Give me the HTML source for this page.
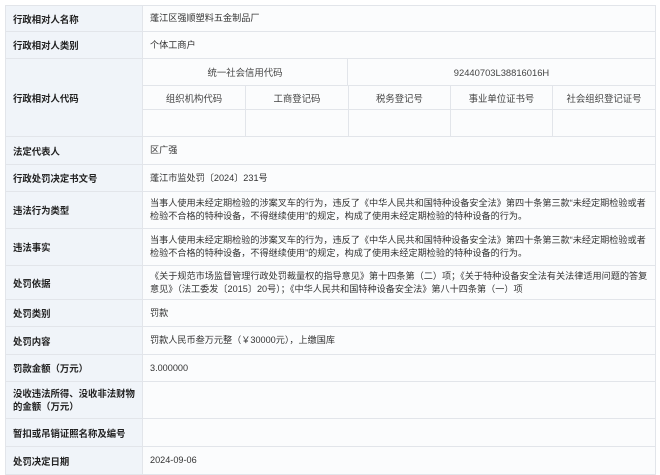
<!DOCTYPE html>
<html><head><meta charset="utf-8"><style>
body{margin:0;width:660px;height:470px;background:#fff;overflow:hidden;font-family:"Liberation Sans","Noto Sans CJK SC",sans-serif;font-size:9.4px;color:#333}
.c{position:absolute;box-sizing:border-box;border-right:1px solid #e2e5ea;border-bottom:1px solid #e2e5ea;display:flex;align-items:center}
.l{background:#f0f4f9;left:5px;width:138px;padding-left:7px;font-weight:bold;color:#222;border-left:1px solid #e2e5ea}
.v{background:#fbfcfd;left:143px;width:513px;padding:0 5px 0 7px;line-height:13px;font-size:9.15px}
.s{background:#fbfcfd;justify-content:center;color:#444}
</style></head><body>
<div class="c l" style="top:5px;height:27px;border-top:1px solid #e2e5ea">行政相对人名称</div>
<div class="c v" style="top:5px;height:27px;border-top:1px solid #e2e5ea">蓬江区强顺塑料五金制品厂</div>
<div class="c l" style="top:32px;height:27px">行政相对人类别</div>
<div class="c v" style="top:32px;height:27px">个体工商户</div>
<div class="c l" style="top:59px;height:78px">行政相对人代码</div>
<div class="c s" style="top:59px;left:143px;width:205px;height:27px">统一社会信用代码</div>
<div class="c s" style="top:59px;left:348px;width:308px;height:27px">92440703L38816016H</div>
<div class="c s" style="top:86px;left:143px;width:103px;height:24px">组织机构代码</div>
<div class="c s" style="top:86px;left:246px;width:103px;height:24px">工商登记码</div>
<div class="c s" style="top:86px;left:349px;width:102px;height:24px">税务登记号</div>
<div class="c s" style="top:86px;left:451px;width:102px;height:24px">事业单位证书号</div>
<div class="c s" style="top:86px;left:553px;width:103px;height:24px">社会组织登记证号</div>
<div class="c s" style="top:110px;left:143px;width:103px;height:27px"></div>
<div class="c s" style="top:110px;left:246px;width:103px;height:27px"></div>
<div class="c s" style="top:110px;left:349px;width:102px;height:27px"></div>
<div class="c s" style="top:110px;left:451px;width:102px;height:27px"></div>
<div class="c s" style="top:110px;left:553px;width:103px;height:27px"></div>
<div class="c l" style="top:137px;height:28px">法定代表人</div>
<div class="c v" style="top:137px;height:28px">区广强</div>
<div class="c l" style="top:165px;height:27px">行政处罚决定书文号</div>
<div class="c v" style="top:165px;height:27px">蓬江市监处罚〔2024〕231号</div>
<div class="c l" style="top:192px;height:37px">违法行为类型</div>
<div class="c v" style="top:192px;height:37px">当事人使用未经定期检验的涉案叉车的行为，违反了《中华人民共和国特种设备安全法》第四十条第三款“未经定期检验或者检验不合格的特种设备，不得继续使用”的规定，构成了使用未经定期检验的特种设备的行为。</div>
<div class="c l" style="top:229px;height:37px">违法事实</div>
<div class="c v" style="top:229px;height:37px">当事人使用未经定期检验的涉案叉车的行为，违反了《中华人民共和国特种设备安全法》第四十条第三款“未经定期检验或者检验不合格的特种设备，不得继续使用”的规定，构成了使用未经定期检验的特种设备的行为。</div>
<div class="c l" style="top:266px;height:34px">处罚依据</div>
<div class="c v" style="top:266px;height:34px">《关于规范市场监督管理行政处罚裁量权的指导意见》第十四条第（二）项；《关于特种设备安全法有关法律适用问题的答复意见》（法工委发〔2015〕20号）；《中华人民共和国特种设备安全法》第八十四条第（一）项</div>
<div class="c l" style="top:300px;height:27px">处罚类别</div>
<div class="c v" style="top:300px;height:27px">罚款</div>
<div class="c l" style="top:327px;height:28px">处罚内容</div>
<div class="c v" style="top:327px;height:28px">罚款人民币叁万元整（￥30000元），上缴国库</div>
<div class="c l" style="top:355px;height:27px">罚款金额（万元）</div>
<div class="c v" style="top:355px;height:27px">3.000000</div>
<div class="c l" style="top:382px;height:37px;line-height:13px">没收违法所得、没收非法财物<br>的金额（万元）</div>
<div class="c v" style="top:382px;height:37px"></div>
<div class="c l" style="top:419px;height:28px">暂扣或吊销证照名称及编号</div>
<div class="c v" style="top:419px;height:28px"></div>
<div class="c l" style="top:447px;height:28px">处罚决定日期</div>
<div class="c v" style="top:447px;height:28px">2024-09-06</div>
</body></html>
